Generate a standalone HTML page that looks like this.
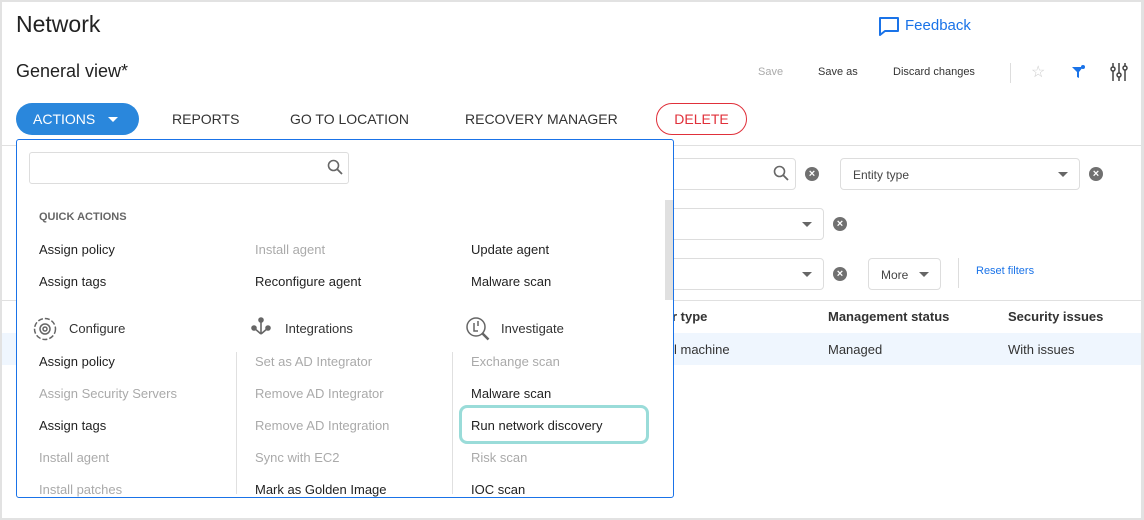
<!DOCTYPE html>
<html><head><style>
*{box-sizing:border-box;margin:0;padding:0}
body{width:1144px;height:520px;background:#fff;font-family:"Liberation Sans",sans-serif;position:relative;overflow:hidden;color:#222}
.frame{position:absolute;left:0;top:0;width:1144px;height:520px;border:2px solid #e2e2e2;border-right-width:3px}
.a{position:absolute;white-space:nowrap}
.t{font-size:13px;color:#222}
.g{color:#aaa}
.sel{position:absolute;border:1px solid #ddd;border-radius:4px;background:#fff}
.caret{position:absolute;width:0;height:0;border-left:5px solid transparent;border-right:5px solid transparent;border-top:5px solid #666}
.x{position:absolute;width:14px;height:14px;border-radius:50%;background:#707070;color:#fff;font-size:11px;line-height:14px;text-align:center;font-weight:bold}
</style></head><body>
<div class="frame"></div>
<div class="a" style="left:16px;top:11px;font-size:23px;color:#222">Network</div>
<svg class="a" style="left:878px;top:16px" width="22" height="21" viewBox="0 0 22 21"><path d="M2 2h18v13H7l-5 4z" fill="none" stroke="#1a73e8" stroke-width="2" stroke-linejoin="round"/></svg>
<div class="a" style="left:905px;top:17px;font-size:15px;color:#1a73e8">Feedback</div>
<div class="a" style="left:16px;top:61px;font-size:18px;color:#222">General view*</div>
<div class="a" style="left:758px;top:66px;font-size:11px;color:#aaa">Save</div>
<div class="a" style="left:818px;top:66px;font-size:11px;color:#333">Save as</div>
<div class="a" style="left:893px;top:66px;font-size:11px;color:#333">Discard changes</div>
<div class="a" style="left:1010px;top:63px;width:1px;height:20px;background:#ddd"></div>
<div class="a" style="left:1031px;top:62px;font-size:16px;color:#ccc">☆</div>
<svg class="a" style="left:1071px;top:64px" width="16" height="16" viewBox="0 0 16 16"><path d="M1 3h11l-4 5v6l-2-1V8z" fill="#1a73e8"/><circle cx="12" cy="3" r="2" fill="#1a73e8"/></svg>
<svg class="a" style="left:1110px;top:62px" width="18" height="20" viewBox="0 0 18 20" stroke="#444" stroke-width="1.5" fill="none"><path d="M3 1v18M9 1v18M15 1v18"/><circle cx="3" cy="7" r="2" fill="#fff"/><circle cx="9" cy="13" r="2" fill="#fff"/><circle cx="15" cy="6" r="2" fill="#fff"/></svg>
<div class="a" style="left:16px;top:103px;width:123px;height:32px;border-radius:16px;background:#2a87dc;color:#fff;font-size:14px;line-height:32px;padding-left:17px">ACTIONS</div>
<div class="caret" style="left:108px;top:117px;border-top-color:#fff"></div>
<div class="a" style="left:172px;top:111px;font-size:14px;color:#333">REPORTS</div>
<div class="a" style="left:290px;top:111px;font-size:14px;color:#333">GO TO LOCATION</div>
<div class="a" style="left:465px;top:111px;font-size:14px;color:#333">RECOVERY MANAGER</div>
<div class="a" style="left:656px;top:103px;width:91px;height:32px;border-radius:16px;border:1px solid #e0303a;color:#e0303a;font-size:14px;line-height:30px;text-align:center">DELETE</div>
<div class="a" style="left:2px;top:145px;width:1139px;height:1px;background:#e0e0e0"></div>
<div class="sel" style="left:600px;top:158px;width:196px;height:32px"></div>
<svg class="a" style="left:773px;top:165px" width="16" height="16" viewBox="0 0 16 16"><circle cx="6.5" cy="6.5" r="5" fill="none" stroke="#666" stroke-width="1.6"/><path d="M10 10l5 5" stroke="#666" stroke-width="1.8"/></svg>
<div class="x" style="left:805px;top:167px">×</div>
<div class="sel" style="left:840px;top:158px;width:240px;height:32px"></div>
<div class="a" style="left:853px;top:168px;font-size:12px;color:#444">Entity type</div>
<div class="caret" style="left:1058px;top:172px"></div>
<div class="x" style="left:1089px;top:167px">×</div>
<div class="sel" style="left:600px;top:208px;width:224px;height:32px"></div>
<div class="caret" style="left:802px;top:222px"></div>
<div class="x" style="left:833px;top:217px">×</div>
<div class="sel" style="left:600px;top:258px;width:224px;height:32px"></div>
<div class="caret" style="left:802px;top:272px"></div>
<div class="x" style="left:833px;top:267px">×</div>
<div class="sel" style="left:868px;top:258px;width:73px;height:32px"></div>
<div class="a" style="left:881px;top:268px;font-size:12px;color:#444">More</div>
<div class="caret" style="left:919px;top:272px"></div>
<div class="a" style="left:958px;top:258px;width:1px;height:30px;background:#ddd"></div>
<div class="a" style="left:976px;top:265px;font-size:11px;color:#1a73e8">Reset filters</div>
<div class="a" style="left:2px;top:300px;width:1139px;height:1px;background:#e0e0e0"></div>
<div class="a" style="left:672px;top:309px;font-size:13px;font-weight:bold;color:#333">r type</div>
<div class="a" style="left:828px;top:309px;font-size:13px;font-weight:bold;color:#333">Management status</div>
<div class="a" style="left:1008px;top:309px;font-size:13px;font-weight:bold;color:#333">Security issues</div>
<div class="a" style="left:2px;top:333px;width:1139px;height:32px;background:#eff6fe"></div>
<div class="a" style="left:674px;top:342px;font-size:13px;color:#333">l machine</div>
<div class="a" style="left:828px;top:342px;font-size:13px;color:#333">Managed</div>
<div class="a" style="left:1008px;top:342px;font-size:13px;color:#333">With issues</div>
<div class="a" style="left:16px;top:139px;width:658px;height:359px;border:1px solid #1a73e8;border-radius:3px;background:#fff;overflow:hidden">
 <div class="a" style="left:12px;top:12px;width:320px;height:32px;border:1px solid #ddd;border-radius:3px"></div>
 <svg class="a" style="left:310px;top:19px" width="16" height="16" viewBox="0 0 16 16"><circle cx="6.5" cy="6.5" r="5" fill="none" stroke="#666" stroke-width="1.6"/><path d="M10 10l5 5" stroke="#666" stroke-width="1.8"/></svg>
 <div class="a" style="left:648px;top:60px;width:8px;height:100px;background:#e0e0e0"></div>
 <div class="a" style="left:22px;top:71px;font-size:11px;font-weight:bold;color:#666">QUICK ACTIONS</div>
 <div class="a t" style="left:22px;top:102px">Assign policy</div>
 <div class="a t g" style="left:238px;top:102px">Install agent</div>
 <div class="a t" style="left:454px;top:102px">Update agent</div>
 <div class="a t" style="left:22px;top:134px">Assign tags</div>
 <div class="a t" style="left:238px;top:134px">Reconfigure agent</div>
 <div class="a t" style="left:454px;top:134px">Malware scan</div>
 <svg class="a" style="left:16px;top:177px" width="24" height="24" viewBox="0 0 24 24" fill="none" stroke="#666" stroke-width="1.5"><circle cx="12" cy="12" r="10.5" stroke-dasharray="5 2"/><circle cx="12" cy="12" r="5"/><circle cx="12" cy="12" r="2"/></svg>
 <div class="a" style="left:52px;top:181px;font-size:13px;color:#333">Configure</div>
 <svg class="a" style="left:233px;top:177px" width="22" height="22" viewBox="0 0 22 22" fill="none" stroke="#666" stroke-width="1.6"><path d="M11 2v15M11 17L4 11M11 17l7-6"/><circle cx="11" cy="3" r="2" fill="#666"/><circle cx="4" cy="11" r="2" fill="#666"/><circle cx="18" cy="11" r="2" fill="#666"/></svg>
 <div class="a" style="left:268px;top:181px;font-size:13px;color:#333">Integrations</div>
 <svg class="a" style="left:448px;top:176px" width="26" height="26" viewBox="0 0 26 26" fill="none" stroke="#666" stroke-width="1.5"><circle cx="11" cy="11" r="9"/><path d="M17.5 17.5l6 6" stroke-width="2.5"/><path d="M9 7v8h4M13 5v5"/></svg>
 <div class="a" style="left:484px;top:181px;font-size:13px;color:#333">Investigate</div>
 <div class="a" style="left:219px;top:212px;width:1px;height:142px;background:#e0e0e0"></div>
 <div class="a" style="left:435px;top:212px;width:1px;height:142px;background:#e0e0e0"></div>
 <div class="a t" style="left:22px;top:214px">Assign policy</div>
 <div class="a t g" style="left:22px;top:246px">Assign Security Servers</div>
 <div class="a t" style="left:22px;top:278px">Assign tags</div>
 <div class="a t g" style="left:22px;top:310px">Install agent</div>
 <div class="a t g" style="left:22px;top:342px">Install patches</div>
 <div class="a t g" style="left:238px;top:214px">Set as AD Integrator</div>
 <div class="a t g" style="left:238px;top:246px">Remove AD Integrator</div>
 <div class="a t g" style="left:238px;top:278px">Remove AD Integration</div>
 <div class="a t g" style="left:238px;top:310px">Sync with EC2</div>
 <div class="a t" style="left:238px;top:342px">Mark as Golden Image</div>
 <div class="a t g" style="left:454px;top:214px">Exchange scan</div>
 <div class="a t" style="left:454px;top:246px">Malware scan</div>
 <div class="a" style="left:442px;top:265px;width:190px;height:39px;border:3px solid #9adcd9;border-radius:8px"></div>
 <div class="a t" style="left:454px;top:278px">Run network discovery</div>
 <div class="a t g" style="left:454px;top:310px">Risk scan</div>
 <div class="a t" style="left:454px;top:342px">IOC scan</div>
</div>
</body></html>
